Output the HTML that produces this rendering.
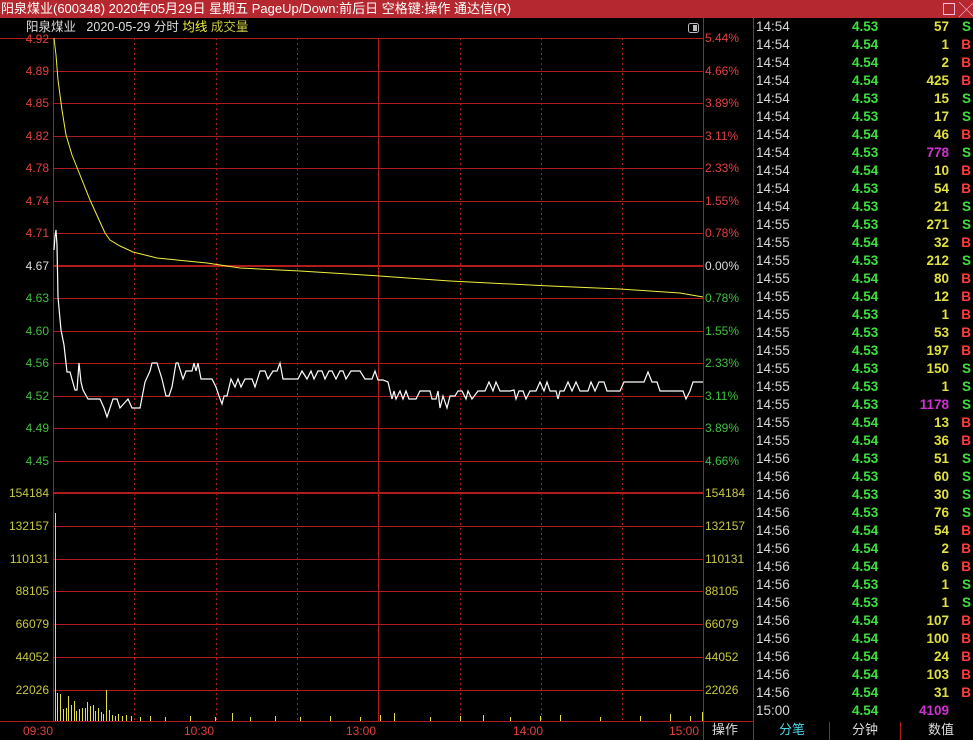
<!DOCTYPE html>
<html><head><meta charset="utf-8"><style>
body{margin:0;width:973px;height:740px;background:#000;overflow:hidden;font-family:"Liberation Sans","Noto Sans CJK SC",sans-serif;position:relative}
#title{position:absolute;left:0;top:0;width:973px;height:18px;background:#b5282f;color:#fff;font-size:13px;line-height:17px;padding-left:1px;white-space:nowrap}
.t{position:absolute;font-size:12px;white-space:nowrap;line-height:14px}
#list{position:absolute;left:754px;top:18px;width:219px}
.r{height:18px;line-height:18px;font-size:13.5px;font-weight:bold;position:relative}
.r span{position:absolute}
.tm{left:2px;color:#d8d8d8;font-weight:normal}
.p{left:98px;color:#3ee03e}
.v{right:24px;color:#e0e040}
.bs{right:2px}
.B{color:#ff3c3c}.S{color:#3ee03e}
</style></head><body>
<div id="title">阳泉煤业(600348) 2020年05月29日 星期五 PageUp/Down:前后日 空格键:操作 通达信(R)</div>
<div style="position:absolute;left:943px;top:3px;width:10px;height:10px;border:1px solid #fbd"></div>
<div style="position:absolute;left:959px;top:-1px;color:#fbd;font-size:15px">╳</div>
<svg style="position:absolute;left:0;top:0" width="973" height="740">
<g stroke="#b01c1c" stroke-width="1" fill="none">
<line x1="53" y1="38.5" x2="703" y2="38.5"/><line x1="53" y1="71.5" x2="703" y2="71.5"/><line x1="53" y1="103.5" x2="703" y2="103.5"/><line x1="53" y1="136.5" x2="703" y2="136.5"/><line x1="53" y1="168.5" x2="703" y2="168.5"/><line x1="53" y1="201.5" x2="703" y2="201.5"/><line x1="53" y1="233.5" x2="703" y2="233.5"/>
<line x1="53" y1="266" x2="703" y2="266" stroke-width="2"/>
<line x1="53" y1="298.5" x2="703" y2="298.5"/><line x1="53" y1="331.5" x2="703" y2="331.5"/><line x1="53" y1="363.5" x2="703" y2="363.5"/><line x1="53" y1="396.5" x2="703" y2="396.5"/><line x1="53" y1="428.5" x2="703" y2="428.5"/><line x1="53" y1="461.5" x2="703" y2="461.5"/>
<line x1="53" y1="493" x2="703" y2="493" stroke-width="2"/>
<line x1="53" y1="526.5" x2="703" y2="526.5"/><line x1="53" y1="559.5" x2="703" y2="559.5"/><line x1="53" y1="591.5" x2="703" y2="591.5"/><line x1="53" y1="624.5" x2="703" y2="624.5"/><line x1="53" y1="657.5" x2="703" y2="657.5"/><line x1="53" y1="690.5" x2="703" y2="690.5"/>
<line x1="0" y1="721.5" x2="753" y2="721.5"/>
<line x1="53.5" y1="38" x2="53.5" y2="722"/><line x1="378.5" y1="38" x2="378.5" y2="722"/><line x1="703.5" y1="18" x2="703.5" y2="740"/><line x1="753.5" y1="18" x2="753.5" y2="740"/>
<line x1="0" y1="38.5" x2="53" y2="38.5"/>
<line x1="829.5" y1="722" x2="829.5" y2="740"/><line x1="900.5" y1="722" x2="900.5" y2="740"/>
</g>
<g stroke="#b01c1c" stroke-width="1" stroke-dasharray="2,3">
<line x1="134.5" y1="38" x2="134.5" y2="722"/><line x1="216.5" y1="38" x2="216.5" y2="722"/><line x1="297.5" y1="38" x2="297.5" y2="722"/><line x1="460.5" y1="38" x2="460.5" y2="722"/><line x1="541.5" y1="38" x2="541.5" y2="722"/><line x1="622.5" y1="38" x2="622.5" y2="722"/>
</g>
<polyline fill="none" stroke="#f0f040" stroke-width="1" points="54,38 56,55 58,80 62,110 66,135 72,155 80,175 90,200 100,222 105,233 110,240 120,246 133,252 157,258 207,263 240,268 300,271 380,276 450,281 550,286 620,289 680,293 703,297"/>
<polyline fill="none" stroke="#fff" stroke-width="1.2" points="54,250 55,236 56,230 57,245 58,297 61,330 64,345 67,372 70,372 75,390 77,390 79,363 81,382 83,390 88,399 100,399 104,408 107,417 110,408 113,399 117,399 120,408 128,399 132,408 140,408 145,382 150,371 152,363 157,363 162,379 166,396 169,396 172,387 176,363 178,363 183,379 186,371 192,371 194,363 196,371 198,363 201,379 212,379 216,387 219,396 222,404 224,396 227,396 231,379 235,387 238,379 241,387 245,379 252,379 255,387 260,371 265,371 268,379 273,371 277,371 280,363 283,379 298,379 302,371 307,379 311,371 314,379 318,371 322,371 325,379 329,371 332,371 336,379 340,371 343,371 346,379 351,371 360,371 365,379 372,379 375,371 378,380 383,380 388,382 392,399 394,391 396,399 400,391 403,399 406,391 409,399 416,399 420,391 430,391 432,399 436,399 438,391 440,408 443,396 447,408 450,396 455,396 458,391 462,391 466,399 468,391 472,399 478,391 485,391 489,382 493,391 496,382 500,391 510,391 514,390 516,399 519,391 523,391 526,399 530,391 536,391 540,382 544,391 547,382 550,391 556,391 558,399 560,391 564,391 568,382 572,391 576,382 580,391 588,391 591,382 595,391 599,382 604,382 607,391 613,391 620,391 624,382 634,382 644,382 648,372 652,382 657,382 660,391 670,391 683,391 686,399 690,391 693,382 703,382"/>
<g stroke="#e0e040" stroke-width="1">
<line x1="55.5" y1="513" x2="55.5" y2="721"/>
<line x1="57.5" y1="693" x2="57.5" y2="721"/><line x1="60.5" y1="694" x2="60.5" y2="721"/><line x1="63.5" y1="709" x2="63.5" y2="721"/><line x1="66.5" y1="708" x2="66.5" y2="721"/><line x1="68.5" y1="696" x2="68.5" y2="721"/><line x1="71.5" y1="705" x2="71.5" y2="721"/><line x1="74.5" y1="701" x2="74.5" y2="721"/><line x1="76.5" y1="711" x2="76.5" y2="721"/><line x1="79.5" y1="709" x2="79.5" y2="721"/><line x1="82.5" y1="708" x2="82.5" y2="721"/><line x1="85.5" y1="708" x2="85.5" y2="721"/><line x1="87.5" y1="702" x2="87.5" y2="721"/><line x1="90.5" y1="706" x2="90.5" y2="721"/><line x1="93.5" y1="705" x2="93.5" y2="721"/><line x1="95.5" y1="711" x2="95.5" y2="721"/><line x1="98.5" y1="708" x2="98.5" y2="721"/><line x1="101.5" y1="712" x2="101.5" y2="721"/><line x1="103.5" y1="714" x2="103.5" y2="721"/><line x1="106.5" y1="690" x2="106.5" y2="721"/><line x1="109.5" y1="710" x2="109.5" y2="721"/><line x1="112.5" y1="715" x2="112.5" y2="721"/><line x1="115.5" y1="716" x2="115.5" y2="721"/><line x1="118.5" y1="714" x2="118.5" y2="721"/><line x1="122.5" y1="716" x2="122.5" y2="721"/><line x1="126.5" y1="715" x2="126.5" y2="721"/><line x1="131.5" y1="716" x2="131.5" y2="721"/><line x1="140.5" y1="717" x2="140.5" y2="721"/><line x1="150.5" y1="716" x2="150.5" y2="721"/><line x1="165.5" y1="717" x2="165.5" y2="721"/><line x1="190.5" y1="716" x2="190.5" y2="721"/><line x1="215.5" y1="717" x2="215.5" y2="721"/><line x1="232.5" y1="713" x2="232.5" y2="721"/><line x1="250.5" y1="717" x2="250.5" y2="721"/><line x1="275.5" y1="716" x2="275.5" y2="721"/><line x1="300.5" y1="717" x2="300.5" y2="721"/><line x1="330.5" y1="716" x2="330.5" y2="721"/><line x1="360.5" y1="717" x2="360.5" y2="721"/><line x1="380.5" y1="715" x2="380.5" y2="721"/><line x1="394.5" y1="713" x2="394.5" y2="721"/><line x1="430.5" y1="717" x2="430.5" y2="721"/><line x1="460.5" y1="716" x2="460.5" y2="721"/><line x1="483.5" y1="715" x2="483.5" y2="721"/><line x1="510.5" y1="717" x2="510.5" y2="721"/><line x1="540.5" y1="716" x2="540.5" y2="721"/><line x1="560.5" y1="715" x2="560.5" y2="721"/><line x1="600.5" y1="717" x2="600.5" y2="721"/><line x1="640.5" y1="716" x2="640.5" y2="721"/><line x1="670.5" y1="714" x2="670.5" y2="721"/><line x1="690.5" y1="716" x2="690.5" y2="721"/><line x1="702.5" y1="712" x2="702.5" y2="721"/>
</g>
<rect x="688.5" y="23.5" width="10" height="9" rx="2" fill="none" stroke="#bbb"/><rect x="693" y="25" width="4" height="6" fill="#bbb"/>
</svg>
<div class="t" style="left:26px;top:20px;color:#ddd;font-size:12.5px">阳泉煤业&nbsp;&nbsp; 2020-05-29 分时 <span style="color:#f0f040">均线</span> <span style="color:#c8c840">成交量</span></div>
<div style="position:absolute;left:0;top:0;width:49px;text-align:right;font-size:12px;line-height:14px">
<div class="t" style="right:0;top:32px;color:#e04040">4.92</div><div class="t" style="right:0;top:64px;color:#e04040">4.89</div><div class="t" style="right:0;top:96px;color:#e04040">4.85</div><div class="t" style="right:0;top:129px;color:#e04040">4.82</div><div class="t" style="right:0;top:161px;color:#e04040">4.78</div><div class="t" style="right:0;top:194px;color:#e04040">4.74</div><div class="t" style="right:0;top:226px;color:#e04040">4.71</div><div class="t" style="right:0;top:259px;color:#ddd">4.67</div><div class="t" style="right:0;top:291px;color:#3ec03e">4.63</div><div class="t" style="right:0;top:324px;color:#3ec03e">4.60</div><div class="t" style="right:0;top:356px;color:#3ec03e">4.56</div><div class="t" style="right:0;top:389px;color:#3ec03e">4.52</div><div class="t" style="right:0;top:421px;color:#3ec03e">4.49</div><div class="t" style="right:0;top:454px;color:#3ec03e">4.45</div>
<div class="t" style="right:0;top:486px;color:#c8c840">154184</div><div class="t" style="right:0;top:519px;color:#c8c840">132157</div><div class="t" style="right:0;top:552px;color:#c8c840">110131</div><div class="t" style="right:0;top:584px;color:#c8c840">88105</div><div class="t" style="right:0;top:617px;color:#c8c840">66079</div><div class="t" style="right:0;top:650px;color:#c8c840">44052</div><div class="t" style="right:0;top:683px;color:#c8c840">22026</div>
</div>
<div style="font-size:12px">
<div class="t" style="left:705px;top:31px;color:#e04040">5.44%</div><div class="t" style="left:705px;top:64px;color:#e04040">4.66%</div><div class="t" style="left:705px;top:96px;color:#e04040">3.89%</div><div class="t" style="left:705px;top:129px;color:#e04040">3.11%</div><div class="t" style="left:705px;top:161px;color:#e04040">2.33%</div><div class="t" style="left:705px;top:194px;color:#e04040">1.55%</div><div class="t" style="left:705px;top:226px;color:#e04040">0.78%</div><div class="t" style="left:705px;top:259px;color:#ddd">0.00%</div><div class="t" style="left:705px;top:291px;color:#3ec03e">0.78%</div><div class="t" style="left:705px;top:324px;color:#3ec03e">1.55%</div><div class="t" style="left:705px;top:356px;color:#3ec03e">2.33%</div><div class="t" style="left:705px;top:389px;color:#3ec03e">3.11%</div><div class="t" style="left:705px;top:421px;color:#3ec03e">3.89%</div><div class="t" style="left:705px;top:454px;color:#3ec03e">4.66%</div>
<div class="t" style="left:705px;top:486px;color:#c8c840">154184</div><div class="t" style="left:705px;top:519px;color:#c8c840">132157</div><div class="t" style="left:705px;top:552px;color:#c8c840">110131</div><div class="t" style="left:705px;top:584px;color:#c8c840">88105</div><div class="t" style="left:705px;top:617px;color:#c8c840">66079</div><div class="t" style="left:705px;top:650px;color:#c8c840">44052</div><div class="t" style="left:705px;top:683px;color:#c8c840">22026</div>
<div class="t" style="left:23px;top:724px;color:#e04040">09:30</div><div class="t" style="left:184px;top:724px;color:#e04040">10:30</div><div class="t" style="left:346px;top:724px;color:#e04040">13:00</div><div class="t" style="left:513px;top:724px;color:#e04040">14:00</div><div class="t" style="left:669px;top:724px;color:#e04040">15:00</div>
<div class="t" style="left:712px;top:723px;color:#ddd;font-size:13px">操作</div><div class="t" style="left:779px;top:723px;color:#4ad8e8;font-size:13px">分笔</div><div class="t" style="left:852px;top:723px;color:#ddd;font-size:13px">分钟</div><div class="t" style="left:928px;top:723px;color:#ddd;font-size:13px">数值</div>
</div>
<div id="list">
<div class="r"><span class="tm">14:54</span><span class="p">4.53</span><span class="v">57</span><span class="bs S">S</span></div>
<div class="r"><span class="tm">14:54</span><span class="p">4.54</span><span class="v">1</span><span class="bs B">B</span></div>
<div class="r"><span class="tm">14:54</span><span class="p">4.54</span><span class="v">2</span><span class="bs B">B</span></div>
<div class="r"><span class="tm">14:54</span><span class="p">4.54</span><span class="v">425</span><span class="bs B">B</span></div>
<div class="r"><span class="tm">14:54</span><span class="p">4.53</span><span class="v">15</span><span class="bs S">S</span></div>
<div class="r"><span class="tm">14:54</span><span class="p">4.53</span><span class="v">17</span><span class="bs S">S</span></div>
<div class="r"><span class="tm">14:54</span><span class="p">4.54</span><span class="v">46</span><span class="bs B">B</span></div>
<div class="r"><span class="tm">14:54</span><span class="p">4.53</span><span class="v" style="color:#d030d0">778</span><span class="bs S">S</span></div>
<div class="r"><span class="tm">14:54</span><span class="p">4.54</span><span class="v">10</span><span class="bs B">B</span></div>
<div class="r"><span class="tm">14:54</span><span class="p">4.53</span><span class="v">54</span><span class="bs B">B</span></div>
<div class="r"><span class="tm">14:54</span><span class="p">4.53</span><span class="v">21</span><span class="bs S">S</span></div>
<div class="r"><span class="tm">14:55</span><span class="p">4.53</span><span class="v">271</span><span class="bs S">S</span></div>
<div class="r"><span class="tm">14:55</span><span class="p">4.54</span><span class="v">32</span><span class="bs B">B</span></div>
<div class="r"><span class="tm">14:55</span><span class="p">4.53</span><span class="v">212</span><span class="bs S">S</span></div>
<div class="r"><span class="tm">14:55</span><span class="p">4.54</span><span class="v">80</span><span class="bs B">B</span></div>
<div class="r"><span class="tm">14:55</span><span class="p">4.54</span><span class="v">12</span><span class="bs B">B</span></div>
<div class="r"><span class="tm">14:55</span><span class="p">4.53</span><span class="v">1</span><span class="bs B">B</span></div>
<div class="r"><span class="tm">14:55</span><span class="p">4.53</span><span class="v">53</span><span class="bs B">B</span></div>
<div class="r"><span class="tm">14:55</span><span class="p">4.53</span><span class="v">197</span><span class="bs B">B</span></div>
<div class="r"><span class="tm">14:55</span><span class="p">4.53</span><span class="v">150</span><span class="bs S">S</span></div>
<div class="r"><span class="tm">14:55</span><span class="p">4.53</span><span class="v">1</span><span class="bs S">S</span></div>
<div class="r"><span class="tm">14:55</span><span class="p">4.53</span><span class="v" style="color:#d030d0">1178</span><span class="bs S">S</span></div>
<div class="r"><span class="tm">14:55</span><span class="p">4.54</span><span class="v">13</span><span class="bs B">B</span></div>
<div class="r"><span class="tm">14:55</span><span class="p">4.54</span><span class="v">36</span><span class="bs B">B</span></div>
<div class="r"><span class="tm">14:56</span><span class="p">4.53</span><span class="v">51</span><span class="bs S">S</span></div>
<div class="r"><span class="tm">14:56</span><span class="p">4.53</span><span class="v">60</span><span class="bs S">S</span></div>
<div class="r"><span class="tm">14:56</span><span class="p">4.53</span><span class="v">30</span><span class="bs S">S</span></div>
<div class="r"><span class="tm">14:56</span><span class="p">4.53</span><span class="v">76</span><span class="bs S">S</span></div>
<div class="r"><span class="tm">14:56</span><span class="p">4.54</span><span class="v">54</span><span class="bs B">B</span></div>
<div class="r"><span class="tm">14:56</span><span class="p">4.54</span><span class="v">2</span><span class="bs B">B</span></div>
<div class="r"><span class="tm">14:56</span><span class="p">4.54</span><span class="v">6</span><span class="bs B">B</span></div>
<div class="r"><span class="tm">14:56</span><span class="p">4.53</span><span class="v">1</span><span class="bs S">S</span></div>
<div class="r"><span class="tm">14:56</span><span class="p">4.53</span><span class="v">1</span><span class="bs S">S</span></div>
<div class="r"><span class="tm">14:56</span><span class="p">4.54</span><span class="v">107</span><span class="bs B">B</span></div>
<div class="r"><span class="tm">14:56</span><span class="p">4.54</span><span class="v">100</span><span class="bs B">B</span></div>
<div class="r"><span class="tm">14:56</span><span class="p">4.54</span><span class="v">24</span><span class="bs B">B</span></div>
<div class="r"><span class="tm">14:56</span><span class="p">4.54</span><span class="v">103</span><span class="bs B">B</span></div>
<div class="r"><span class="tm">14:56</span><span class="p">4.54</span><span class="v">31</span><span class="bs B">B</span></div>
<div class="r"><span class="tm">15:00</span><span class="p">4.54</span><span class="v" style="color:#d030d0">4109</span></div>
</div>
</body></html>
